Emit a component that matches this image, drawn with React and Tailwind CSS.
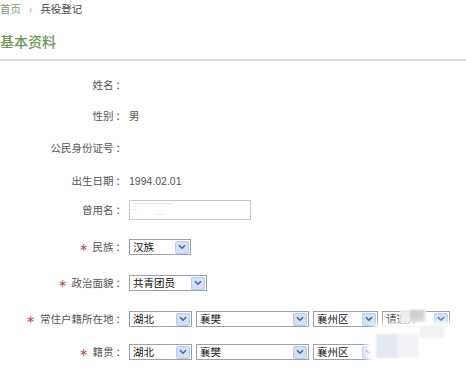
import React from 'react';

const Arrow = () => (
  <span className="flex h-[13px] w-[14px] items-center justify-center rounded-[2px] border border-[#b9cbee] bg-[#d3e0f7] mr-[1px]">
    <svg width="8" height="6" viewBox="0 0 8 6">
      <path d="M1 1.2 L4 4.2 L7 1.2" fill="none" stroke="#4a62a0" strokeWidth="1.6" />
    </svg>
  </span>
);

const Select = ({ text, w }) => (
  <div
    className="flex h-[16px] shrink-0 items-center border border-[#9aa3ad] bg-white"
    style={{ width: w }}
  >
    <span className="flex-1 pl-[3px] text-[10.5px] leading-none text-[#111]">{text}</span>
    <Arrow />
  </div>
);

const Label = ({ text, star }) => (
  <div className="w-[126px] shrink-0 text-right text-[10.5px] leading-none text-[#555]">
    {star && <span className="mr-[5px] text-[#b05050]">∗</span>}
    {text}
    <span className="ml-[2px]">：</span>
  </div>
);

const Row = ({ mt, label, star, children }) => (
  <div className={`flex h-[20px] items-center ${mt}`}>
    <Label text={label} star={star} />
    <div className="ml-[3px] flex items-center gap-[4px] text-[10.5px] leading-none text-[#555]">
      {children}
    </div>
  </div>
);

export default function App() {
  return (
    <div className="relative h-[367px] w-[466px] overflow-hidden bg-white font-['Noto_Sans_CJK_SC','Liberation_Sans',sans-serif]">
      <div className="flex h-[18px] items-center text-[10.5px] leading-none">
        <span className="text-[#7f9a72]">首页</span>
        <span className="mx-[8px] text-[#999]">›</span>
        <span className="text-[#444]">兵役登记</span>
      </div>
      <div className="mt-[15px] h-[16px] text-[14px] font-medium leading-[16px] text-[#6a9658]">基本资料</div>
      <div className="mt-[10px] h-[2px] bg-[#dedede]" />

      <Row mt="mt-[14px]" label="姓名" />
      <Row mt="mt-[11px]" label="性别">男</Row>
      <Row mt="mt-[12px]" label="公民身份证号" />
      <Row mt="mt-[13px]" label="出生日期">
        <span className="font-['Liberation_Sans',sans-serif] text-[10.5px] text-[#555]">1994.02.01</span>
      </Row>
      <Row mt="mt-[9px]" label="曾用名">
        <div className="h-[20px] w-[122px] border border-[#bccdb6] bg-white px-[3px] pt-[2px]">
          <div className="h-[1px] w-[40px] bg-[#dfe6dc]" />
          <div className="mt-[5px] h-[1px] w-[4px] bg-[#e4e9e2]" />
          <div className="ml-[22px] mt-[4px] h-[1px] w-[10px] bg-[#e4e9e2]" />
        </div>
      </Row>
      <Row mt="mt-[17px]" label="民族" star>
        <Select text="汉族" w={62} />
      </Row>
      <Row mt="mt-[16px]" label="政治面貌" star>
        <Select text="共青团员" w={78} />
      </Row>
      <Row mt="mt-[16px]" label="常住户籍所在地" star>
        <Select text="湖北" w={63} />
        <Select text="襄樊" w={113} />
        <Select text="襄州区" w={65} />
        <Select text="请选择" w={68} />
      </Row>
      <Row mt="mt-[13px]" label="籍贯" star>
        <Select text="湖北" w={63} />
        <Select text="襄樊" w={113} />
        <Select text="襄州区" w={65} />
        <Select text="请选择" w={68} />
      </Row>

      <div className="absolute left-[400px] top-[310px] h-[12px] w-[26px] bg-[#eeeeee] blur-[1px]" />
      <div className="absolute left-[410px] top-[310px] h-[12px] w-[14px] bg-[#cfcfcf] blur-[1px]" />
      <div className="absolute left-[366px] top-[322px] h-[50px] w-[110px] rounded-[20px] bg-white blur-[3px]" />
      <div className="absolute left-[376px] top-[334px] h-[24px] w-[22px] bg-[#e4e9f0] blur-[1px]" />
      <div className="absolute left-[398px] top-[334px] h-[24px] w-[20px] bg-[#f0f2f5] blur-[1px]" />
      <div className="absolute left-[420px] top-[326px] h-[12px] w-[24px] bg-[#f1f1f1] blur-[1px]" />
    </div>
  );
}
